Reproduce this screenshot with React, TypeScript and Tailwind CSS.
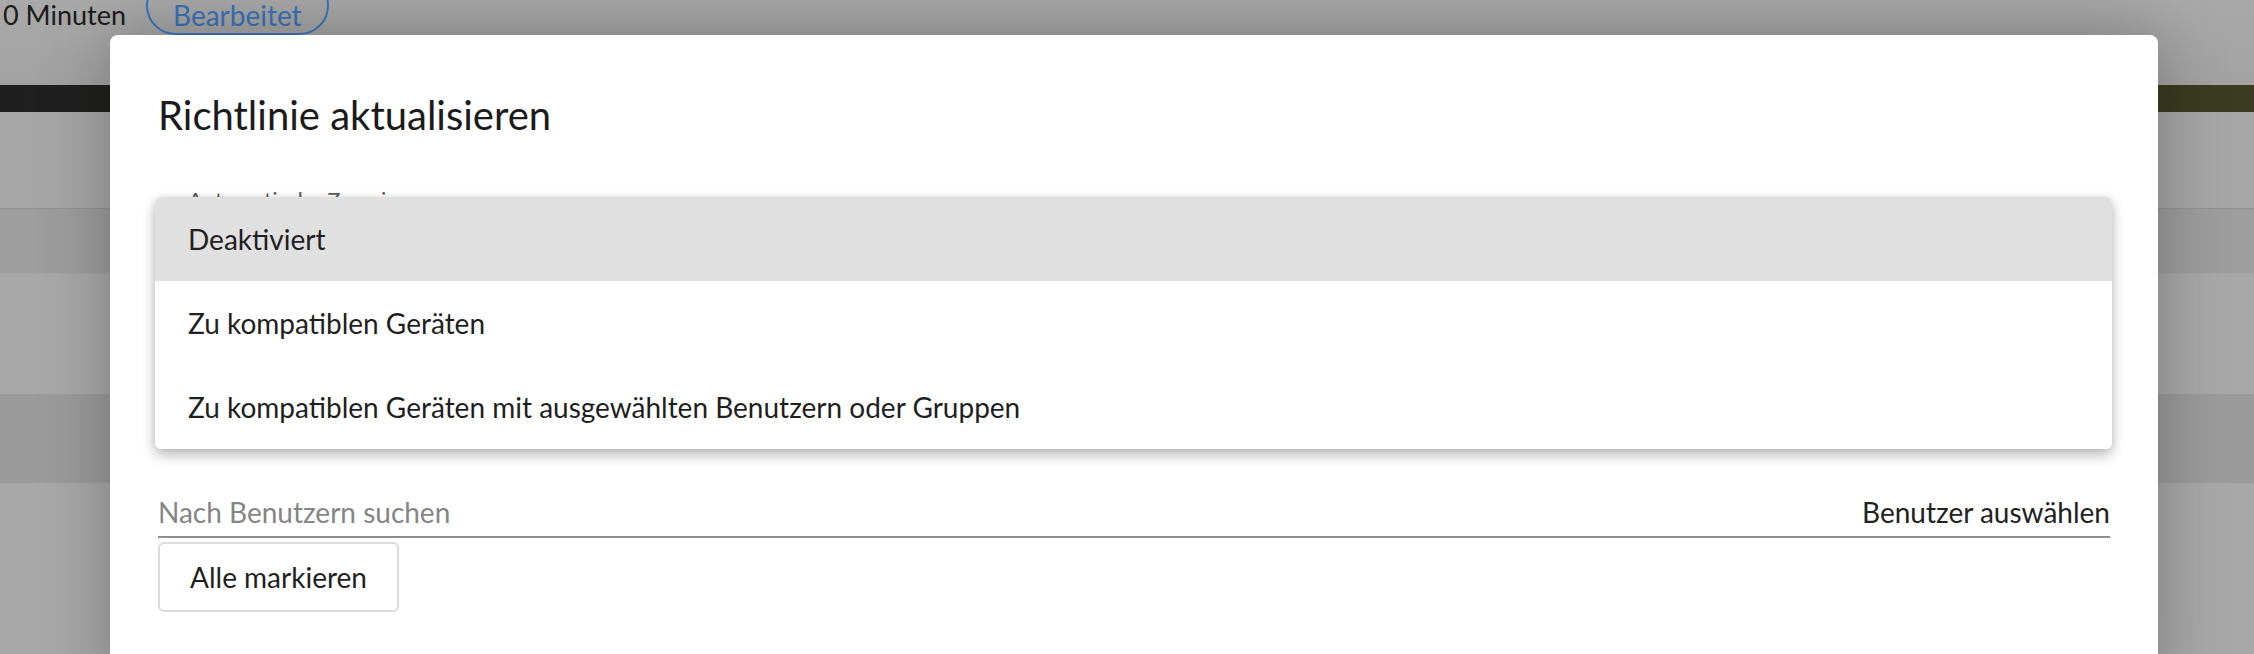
const font = { fontFamily: 'Lato, "Noto Sans", sans-serif' }

const options = [
  'Deaktiviert',
  'Zu kompatiblen Geräten',
  'Zu kompatiblen Geräten mit ausgewählten Benutzern oder Gruppen',
]

function PageBehind() {
  return (
    <div className="flex h-full flex-col">
      <div className="flex h-[85px] items-start bg-gradient-to-b from-[#a9a9a9] to-[#a2a2a2]">
        <span className="-mt-[1px] ml-[3px] text-[27px] leading-[32px] text-[#1c1c1c]">0 Minuten</span>
        <span className="-mt-[24px] ml-[20px] h-[59px] rounded-full border-2 border-[#3a74bd] px-[25px] pt-[21px] text-[28px] leading-[32px] text-[#3a72b8]">
          Bearbeitet
        </span>
      </div>
      <div className="h-[27px] bg-gradient-to-r from-[#1f1f1f] via-[#2e2e26] to-[#3c3c20]" />
      <div className="h-[96px] bg-[#a6a6a6]" />
      <div className="h-[65px] border-t border-[#929292] bg-[#9d9d9d]" />
      <div className="h-[121px] border-t border-[#a3a3a3] bg-[#a8a8a8]" />
      <div className="h-[89px] bg-[#9b9b9b]" />
      <div className="flex-1 bg-[#a8a8a8]" />
    </div>
  )
}

export default function App() {
  return (
    <div className="relative h-[654px] w-[2254px] overflow-hidden bg-[#a6a6a6]" style={font}>
      <PageBehind />

      <div className="absolute left-[110px] top-[35px] h-[660px] w-[2048px] rounded-[8px] bg-white px-[48px] pt-[54px] shadow-[0_0_70px_rgba(0,0,0,0.28)]">
        <h1 className="text-[40px] leading-[52px] font-normal text-[#1b1b1b]">Richtlinie aktualisieren</h1>

        <div className="mt-[46px] h-[308px] pl-[30px]">
          <label className="text-[22px] leading-[26px] text-[#5c5c5c]">Automatische Zuweisung</label>
        </div>

        <div className="flex items-center justify-between border-b-2 border-[#8e8e8e] pb-[7px] text-[28px] leading-[34px]">
          <span className="text-[#858585]">Nach Benutzern suchen</span>
          <span className="text-[#222]">Benutzer auswählen</span>
        </div>

        <button
          type="button"
          className="mt-[4px] flex h-[70px] w-[241px] items-center justify-center rounded-[6px] border-2 border-[#dcdcdc] bg-white text-[28px] text-[#1f1f1f]"
        >
          Alle markieren
        </button>

        <div className="absolute left-[45px] top-[162px] w-[1957px] overflow-hidden rounded-[6px] bg-white shadow-[0_6px_14px_rgba(0,0,0,0.28),0_0_6px_rgba(0,0,0,0.08)]">
          {options.map((o, i) => (
            <div
              key={o}
              className={
                'flex h-[84px] items-center px-[33px] text-[28px] text-[#1f1f1f] ' + (i === 0 ? 'bg-[#e0e0e0]' : 'bg-white')
              }
            >
              {o}
            </div>
          ))}
        </div>
      </div>
    </div>
  )
}
